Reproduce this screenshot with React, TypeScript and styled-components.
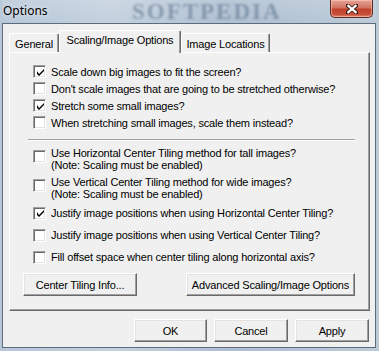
import styled, { createGlobalStyle } from 'styled-components'

const GlobalStyle = createGlobalStyle`
  html, body {
    margin: 0;
    padding: 0;
    background: #ffffff;
  }
  * {
    box-sizing: border-box;
  }
`

interface OptionItem {
  label: string[]
  checked: boolean
}

const groupA: OptionItem[] = [
  { label: ['Scale down big images to fit the screen?'], checked: true },
  { label: ["Don't scale images that are going to be stretched otherwise?"], checked: false },
  { label: ['Stretch some small images?'], checked: true },
  { label: ['When stretching small images, scale them instead?'], checked: false },
]

const groupB: OptionItem[] = [
  {
    label: ['Use Horizontal Center Tiling method for tall images?', '(Note: Scaling must be enabled)'],
    checked: false,
  },
  {
    label: ['Use Vertical Center Tiling method for wide images?', '(Note: Scaling must be enabled)'],
    checked: false,
  },
]

const groupC: OptionItem[] = [
  { label: ['Justify image positions when using Horizontal Center Tiling?'], checked: true },
  { label: ['Justify image positions when using Vertical Center Tiling?'], checked: false },
  { label: ['Fill offset space when center tiling along horizontal axis?'], checked: false },
]

const tabs = [
  { label: 'General', width: 50 },
  { label: 'Scaling/Image Options', width: 122, active: true },
  { label: 'Image Locations', width: 89 },
]

const CheckMark = () => (
  <svg width="7" height="7" viewBox="0 0 7 7">
    <path d="M0 2 L0 5 L2 7 L7 2 L7 0 L2 5 Z" fill="#000" />
  </svg>
)

const Option: React.FC<{ item: OptionItem }> = ({ item }) => {
  const multi = item.label.length > 1
  return (
    <Row $multi={multi}>
      <Box $multi={multi}>{item.checked && <CheckMark />}</Box>
      <Label>
        {item.label.map(line => (
          <div key={line}>{line}</div>
        ))}
      </Label>
    </Row>
  )
}

const App = () => {
  return (
    <>
      <GlobalStyle />
      <Window>
        <TitleBar>
          <Title>Options</Title>
          <Watermark>SOFTPEDIA</Watermark>
          <CloseButton>
            <svg width="12" height="10" viewBox="0 0 12 10">
              <path
                d="M1 1 L11 9 M11 1 L1 9"
                stroke="#3a1a1a"
                strokeWidth="4"
                strokeLinecap="square"
              />
              <path d="M1.5 1.2 L10.5 8.8 M10.5 1.2 L1.5 8.8" stroke="#fff" strokeWidth="2.2" />
            </svg>
          </CloseButton>
        </TitleBar>
        <Client>
          <TabStrip>
            {tabs.map(t => (
              <Tab key={t.label} $active={!!t.active} $width={t.width}>
                {t.label}
              </Tab>
            ))}
          </TabStrip>
          <Panel>
            <GroupA>
              {groupA.map(o => (
                <Option key={o.label[0]} item={o} />
              ))}
            </GroupA>
            <Separator />
            <GroupB>
              {groupB.map(o => (
                <Option key={o.label[0]} item={o} />
              ))}
            </GroupB>
            <GroupC>
              {groupC.map(o => (
                <Option key={o.label[0]} item={o} />
              ))}
            </GroupC>
            <PanelButtons>
              <Button $width={114}>Center Tiling Info...</Button>
              <Button $width={169}>Advanced Scaling/Image Options</Button>
            </PanelButtons>
          </Panel>
          <DialogButtons>
            <Button $width={73}>OK</Button>
            <Button $width={74}>Cancel</Button>
            <Button $width={74}>Apply</Button>
          </DialogButtons>
        </Client>
      </Window>
    </>
  )
}

export default App

const Window = styled.div`
  width: 379px;
  height: 351px;
  display: flex;
  flex-direction: column;
  padding: 0 3px 3px 2px;
  background: linear-gradient(90deg, #b7c7d8 0%, #c4d1de 30%, #aebfd1 60%, #bccad8 100%);
  font-family: 'Liberation Sans', Arial, sans-serif;
  font-size: 11px;
  letter-spacing: -0.18px;
  color: #000;
`
const TitleBar = styled.div`
  position: relative;
  height: 23px;
  display: flex;
  justify-content: space-between;
  align-items: flex-start;
  background: linear-gradient(180deg, rgba(255, 255, 255, 0.15), rgba(255, 255, 255, 0));
`
const Title = styled.div`
  padding: 3px 0 0 1px;
  font-family: 'Noto Sans', 'Liberation Sans', sans-serif;
  font-size: 12px;
  line-height: 16px;
  letter-spacing: 0;
  color: #000;
  text-shadow: 0 0 6px rgba(255, 255, 255, 0.9);
`
const Watermark = styled.div`
  position: absolute;
  left: 130px;
  top: 1px;
  font-family: 'Liberation Serif', serif;
  font-weight: bold;
  font-size: 23px;
  line-height: 22px;
  letter-spacing: 2px;
  color: rgba(70, 95, 125, 0.45);
  filter: blur(1.2px);
  pointer-events: none;
`
const CloseButton = styled.div`
  width: 43px;
  height: 18px;
  margin-right: 3px;
  display: flex;
  align-items: center;
  justify-content: center;
  border: 1px solid #5e2a24;
  border-top: none;
  border-radius: 0 0 5px 5px;
  background: linear-gradient(180deg, #e6a394 0%, #d27362 45%, #c0402c 55%, #c9503a 85%, #e08a6e 100%);
  box-shadow: inset 0 0 0 1px rgba(255, 210, 200, 0.5);
`
const Client = styled.div`
  flex: 1;
  display: flex;
  flex-direction: column;
  padding: 6px 5px 5px 6px;
  background: #f0f0f0;
  border: 1px solid #5d6c7d;
`
const TabStrip = styled.div`
  height: 22px;
  display: flex;
  align-items: flex-end;
  position: relative;
  z-index: 1;
`
const Tab = styled.div<{ $active: boolean; $width: number }>`
  width: ${p => p.$width}px;
  height: ${p => (p.$active ? 23 : 19)}px;
  margin-bottom: ${p => (p.$active ? -1 : 0)}px;
  display: flex;
  justify-content: center;
  padding-top: ${p => (p.$active ? 3 : 4)}px;
  background: #f0f0f0;
  border-top: 1px solid #ffffff;
  border-left: 1px solid #ffffff;
  border-right: 1px solid #696969;
  border-radius: 2px 2px 0 0;
  box-shadow: inset -1px 0 #a0a0a0;
  line-height: 13px;
  white-space: nowrap;
`
const Panel = styled.div`
  width: 361px;
  height: 259px;
  display: flex;
  flex-direction: column;
  padding: 10px 14px 0 13px;
  border-top: 1px solid #ffffff;
  border-left: 1px solid #ffffff;
  border-right: 1px solid #696969;
  border-bottom: 1px solid #696969;
  box-shadow: inset -1px -1px #a0a0a0;
`
const GroupA = styled.div`
  display: flex;
  flex-direction: column;
`
const GroupB = styled.div`
  display: flex;
  flex-direction: column;
  gap: 4px;
  margin-top: 5px;
`
const GroupC = styled.div`
  display: flex;
  flex-direction: column;
  gap: 6px;
  margin-top: 5px;
`
const Row = styled.div<{ $multi: boolean }>`
  display: flex;
  align-items: ${p => (p.$multi ? 'flex-start' : 'center')};
  gap: 5px;
  padding-left: 10px;
  height: ${p => (p.$multi ? 25 : 17)}px;
  white-space: nowrap;
  ${GroupC} & {
    height: 16px;
  }
`
const Box = styled.div<{ $multi: boolean }>`
  width: 13px;
  height: 13px;
  flex: none;
  margin-top: ${p => (p.$multi ? 4 : 0)}px;
  display: flex;
  align-items: center;
  justify-content: center;
  background: #ffffff;
  border: 1px solid;
  border-color: #a0a0a0 #ffffff #ffffff #a0a0a0;
  box-shadow: inset 1px 1px #696969, inset -1px -1px #e3e3e3;
  padding: 1px 0 0 1px;
`
const Label = styled.div`
  line-height: 12px;
  padding-top: 0.5px;
`
const Separator = styled.div`
  margin: 8px 0 0 5px;
  height: 2px;
  border-top: 1px solid #a0a0a0;
  border-bottom: 1px solid #ffffff;
`
const PanelButtons = styled.div`
  display: flex;
  justify-content: space-between;
  margin-top: 8px;
`
const DialogButtons = styled.div`
  display: flex;
  justify-content: flex-end;
  gap: 7px;
  margin-top: 8px;
  padding-right: 1px;
`
const Button = styled.div<{ $width: number }>`
  width: ${p => p.$width}px;
  height: 23px;
  display: flex;
  align-items: center;
  justify-content: center;
  background: #f0f0f0;
  border: 1px solid;
  border-color: #ffffff #696969 #696969 #ffffff;
  box-shadow: inset -1px -1px #a0a0a0, inset 1px 1px #e3e3e3;
  white-space: nowrap;
`
